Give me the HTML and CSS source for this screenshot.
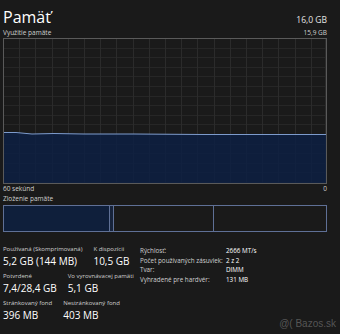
FILE: index.html
```html
<!DOCTYPE html>
<html lang="sk">
<head>
    <meta charset="UTF-8">
    <meta name="viewport" content="width=device-width, initial-scale=1.0">
    <title>Pamäť</title>
    <link rel="stylesheet" href="styles.css">
</head>
<body>

    <div class="panel">
        <div class="header">
            <h1>Pamäť</h1>
            <span class="total">16,0 GB</span>
        </div>

        <div class="caption">
            <span>Využitie pamäte</span>
            <span>15,9 GB</span>
        </div>

        <div class="graph">
            <svg class="usage" viewBox="0 0 322 144" preserveAspectRatio="none">
                <polygon class="usage-fill" points="0,93.5 12,93.5 28,95 50,94.5 80,95 130,95 200,95.5 260,95.5 322,95.5 322,144 0,144"></polygon>
                <polyline class="usage-line" points="0,93.5 12,93.5 28,95 50,94.5 80,95 130,95 200,95.5 260,95.5 322,95.5"></polyline>
            </svg>
        </div>

        <div class="caption">
            <span>60 sekúnd</span>
            <span>0</span>
        </div>

        <div class="caption">
            <span>Zloženie pamäte</span>
        </div>

        <div class="composition">
            <div class="seg in-use"></div>
            <div class="seg modified"></div>
            <div class="seg standby"></div>
            <div class="seg free"></div>
        </div>

        <div class="details">
            <div class="stats">
                <div class="stat-row">
                    <div class="stat">
                        <div class="label">Používaná (Skomprimovaná)</div>
                        <div class="value">5,2 GB (144 MB)</div>
                    </div>
                    <div class="stat">
                        <div class="label">K dispozícii</div>
                        <div class="value">10,5 GB</div>
                    </div>
                </div>
                <div class="stat-row">
                    <div class="stat">
                        <div class="label">Potvrdené</div>
                        <div class="value">7,4/28,4 GB</div>
                    </div>
                    <div class="stat">
                        <div class="label">Vo vyrovnávacej pamäti</div>
                        <div class="value">5,1 GB</div>
                    </div>
                </div>
                <div class="stat-row">
                    <div class="stat">
                        <div class="label">Stránkovaný fond</div>
                        <div class="value">396 MB</div>
                    </div>
                    <div class="stat">
                        <div class="label">Nestránkovaný fond</div>
                        <div class="value">403 MB</div>
                    </div>
                </div>
            </div>

            <div class="specs">
                <span class="spec-name">Rýchlosť:</span><span class="spec-value">2666 MT/s</span>
                <span class="spec-name">Počet používaných zásuviek:</span><span class="spec-value">2 z 2</span>
                <span class="spec-name">Tvar:</span><span class="spec-value">DIMM</span>
                <span class="spec-name">Vyhradené pre hardvér:</span><span class="spec-value">131 MB</span>
            </div>
        </div>
    </div>

    <div class="watermark">@( Bazos.sk</div>

</body>
</html>
```

FILE: styles.css
```css
body {
    margin: 0;
    background-color: #1a1a1a;
    font-family: "Open Sans", "Noto Sans", sans-serif;
    color: #d0d0d0;
    width: 340px;
    height: 334px;
    overflow: hidden;
    position: relative;
}

.panel {
    padding: 7px 13px 0 3px;
}

.header {
    display: flex;
    justify-content: space-between;
    align-items: baseline;
    height: 21px;
}

h1 {
    margin: 0;
    font-size: 16px;
    font-weight: 400;
    line-height: 21px;
    color: #ffffff;
}

.total {
    font-size: 8.5px;
    color: #e6e6e6;
}

.caption {
    display: flex;
    justify-content: space-between;
    font-size: 6.5px;
    line-height: 10px;
    height: 10px;
    color: #cfcfcf;
}

.graph {
    height: 144px;
    border: 1px solid #5a5a5a;
    background-color: #1a1a1a;
    background-image:
        repeating-linear-gradient(to right, #2b2b2b 0, #2b2b2b 1px, transparent 1px, transparent 16.2px),
        repeating-linear-gradient(to bottom, #262626 0, #262626 1px, transparent 1px, transparent 9.6px);
    background-position: -1px -1px;
}

.usage {
    display: block;
    width: 100%;
    height: 100%;
}

.usage-fill {
    fill: rgba(13, 32, 66, 0.86);
}

.usage-line {
    fill: none;
    stroke: #7d9bcc;
    stroke-width: 1;
    vector-effect: non-scaling-stroke;
}

.composition {
    display: flex;
    height: 25px;
    margin-top: 1px;
    border: 1px solid #5f7096;
}

.seg {
    border-right: 1px solid #5f7096;
}

.in-use {
    width: 105px;
    background-color: #0f1f3b;
}

.modified {
    width: 3px;
    background-color: #17233a;
}

.standby {
    width: 99px;
}

.free {
    flex: 1;
    border-right: none;
}

.details {
    display: flex;
    margin-top: 13px;
}

.stats {
    width: 137px;
    display: flex;
    flex-direction: column;
    gap: 4px;
}

.stat-row {
    display: flex;
    gap: 11px;
}

.label {
    font-size: 6px;
    line-height: 9px;
    color: #cfcfcf;
    white-space: nowrap;
}

.value {
    font-size: 10px;
    line-height: 14px;
    color: #ffffff;
    white-space: nowrap;
}

.specs {
    display: grid;
    grid-template-columns: 86px auto;
    grid-auto-rows: 9.5px;
    font-size: 6.3px;
    line-height: 9.5px;
    padding-top: 1px;
}

.spec-name {
    color: #cfcfcf;
    white-space: nowrap;
}

.spec-value {
    color: #ffffff;
    white-space: nowrap;
}

.watermark {
    position: absolute;
    right: 4px;
    bottom: 5px;
    font-size: 10px;
    color: rgba(200, 200, 200, 0.35);
    font-family: "Liberation Sans", Arial, sans-serif;
}
```
